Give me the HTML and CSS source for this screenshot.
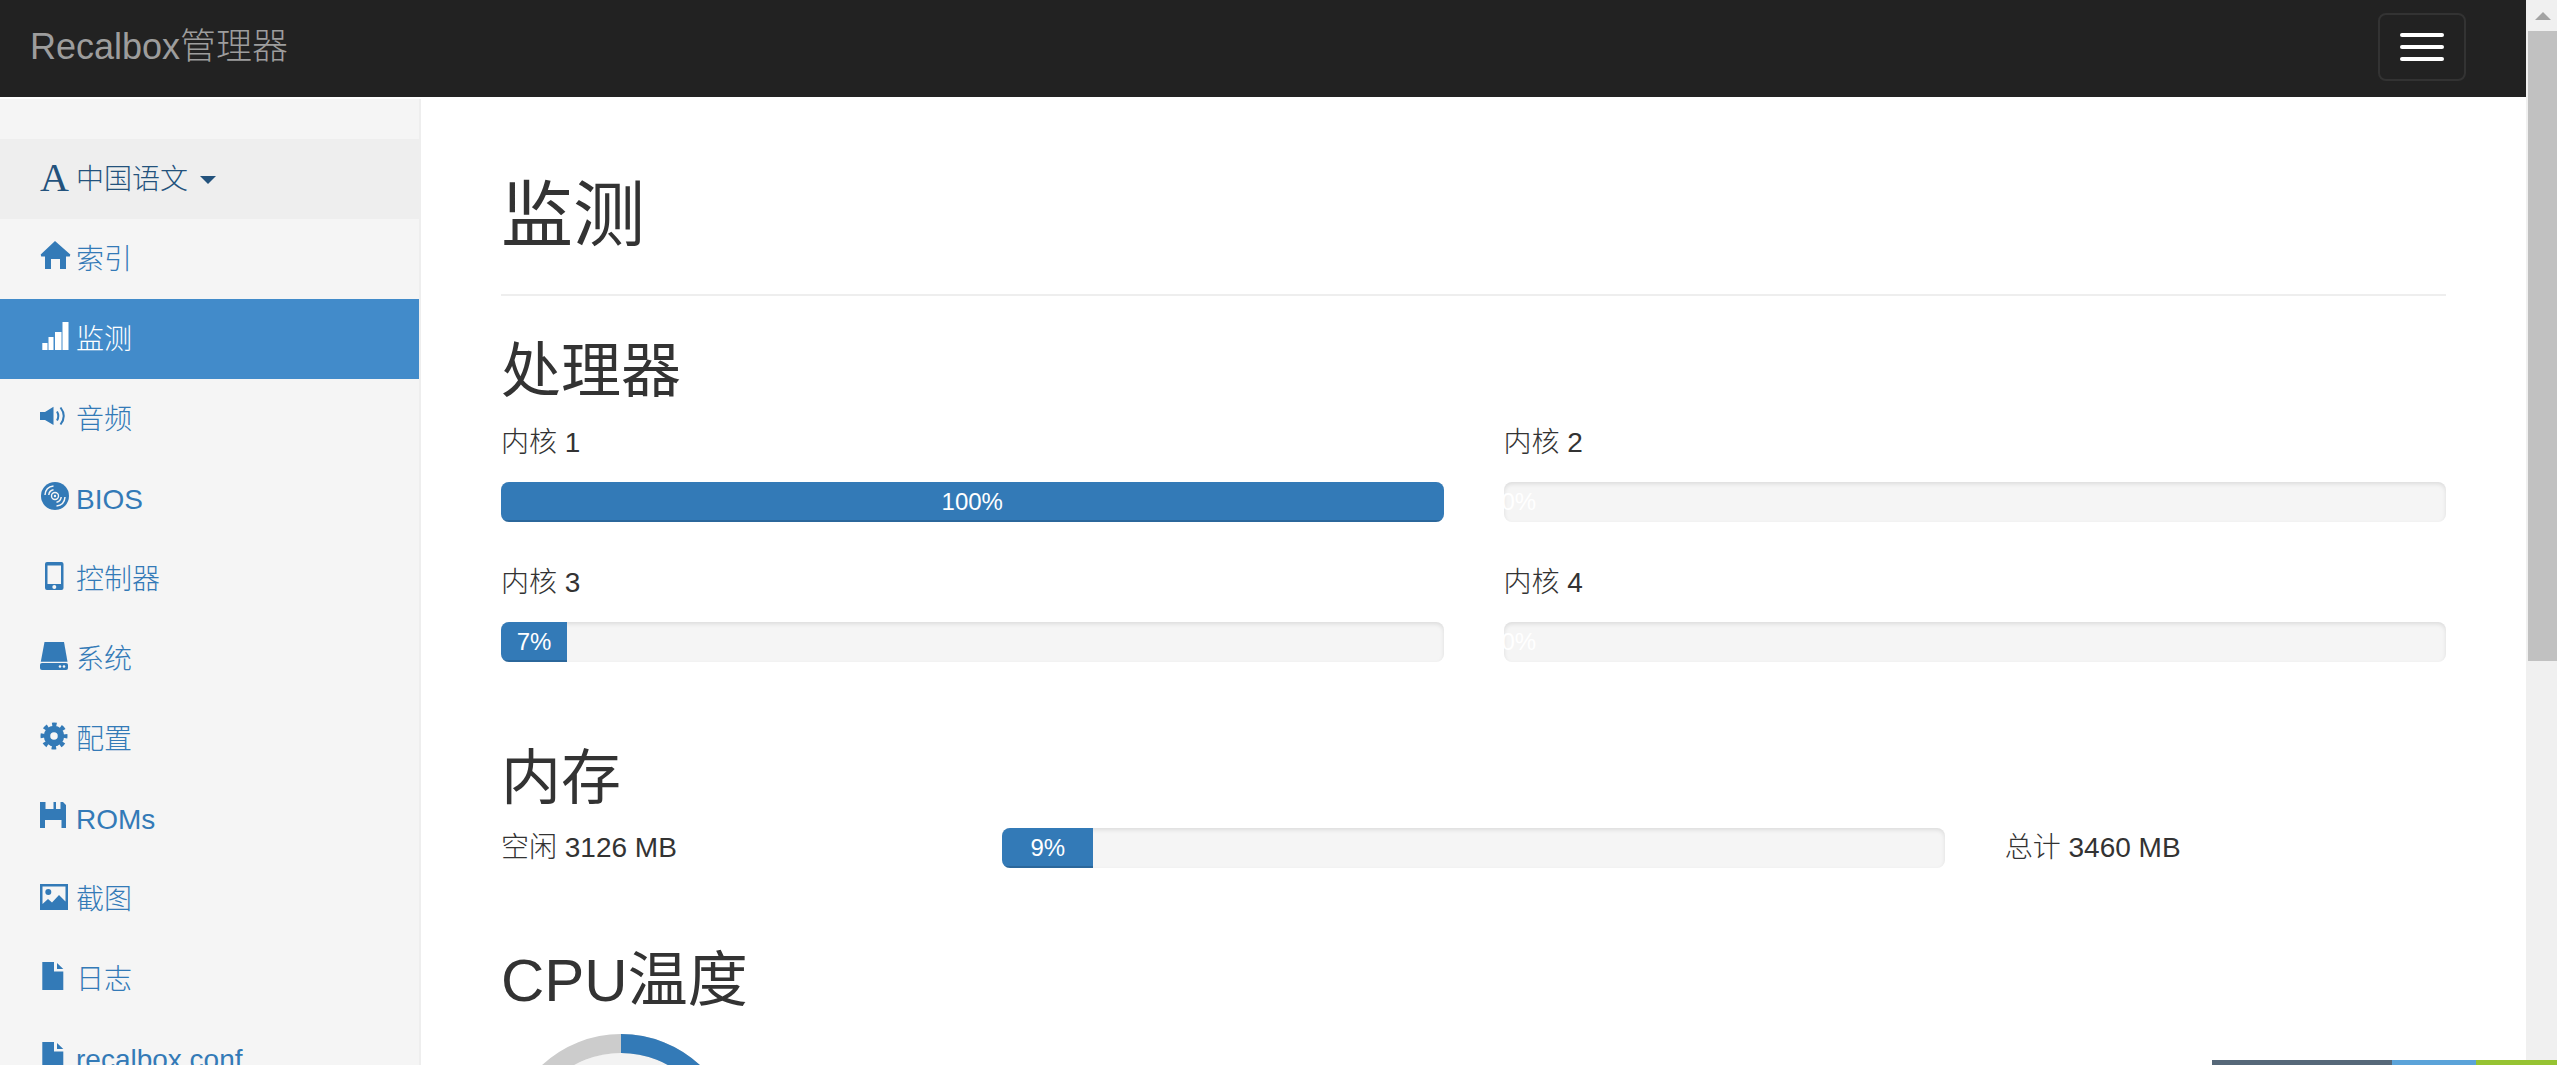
FILE: index.html
```html
<!DOCTYPE html>
<html lang="zh-CN">
<head>
<meta charset="utf-8">
<title>Recalbox管理器</title>
<link rel="stylesheet" href="styles.css">
</head>
<body>
<div class="page">
  <div class="viewport">
    <header class="navbar">
      <a class="brand">Recalbox管理器</a>
      <button class="toggle"><span></span><span></span><span></span></button>
    </header>
    <div class="layout">
      <nav class="sidebar">
        <a class="item lang"><span class="font-icon">A</span><span>中国语文</span><i class="caret"></i></a>
        <a class="item"><svg class="icon" viewBox="0 0 28 28"><path d="M15 0L.7 13.6 1.2 15.6H5V28H11V18H20V28H26V15.6H29.8L30.3 13.6Z"/></svg><span>索引</span></a>
        <a class="item active"><svg class="icon" viewBox="0 0 28 28"><path d="M2.3 22H7.5V29H2.3ZM8.5 16H13.5V29H8.5ZM15 11H21.5V29H15ZM22.5 1H28.5V29H22.5Z"/></svg><span>监测</span></a>
        <a class="item"><svg class="icon" viewBox="0 0 28 28"><path d="M0 11H5L13.5 5.7V24L5 19H0Z"/><path class="line" d="M17 10.5Q19.6 15 17 19.5M20.5 6.5Q27 15 20.5 23.5"/></svg><span>音频</span></a>
        <a class="item"><svg class="icon" viewBox="0 0 28 28"><circle cx="15" cy="15" r="14"/><circle class="hole" cx="15" cy="15" r="4.200"/><circle cx="15" cy="15" r="2.800"/><circle class="hole" cx="15" cy="15" r="1.200"/><path class="hole-line" d="M5 14Q5.500 6 13.500 5M8.800 14Q9.300 9.500 13.500 8.800M25 16Q24.500 24 16.500 25M21.200 16Q20.700 20.500 16.500 21.200"/></svg><span>BIOS</span></a>
        <a class="item"><svg class="icon" viewBox="0 0 28 28"><path fill-rule="evenodd" d="M7 1H21.500Q23.500 1 23.500 3V27Q23.500 29 21.500 29H7Q5 29 5 27V3Q5 1 7 1ZM7.500 4.500V23H21V4.500Z"/><circle class="hole" cx="14.300" cy="26" r="2"/></svg><span>控制器</span></a>
        <a class="item"><svg class="icon" viewBox="0 0 28 28"><path d="M4.500 1H24L27.500 20.700H.8Z"/><rect x="0" y="22" width="28" height="7" rx="2"/><circle class="hole" cx="20" cy="25.500" r="1.300"/><circle class="hole" cx="24" cy="25.500" r="1.300"/></svg><span>系统</span></a>
        <a class="item"><svg class="icon" viewBox="0 0 28 28"><circle class="cog-ring" cx="14" cy="15" r="7"/><circle class="cog-teeth" cx="14" cy="15" r="11.500"/></svg><span>配置</span></a>
        <a class="item"><svg class="icon" viewBox="0 0 28 28"><path fill-rule="evenodd" d="M0 1H23L26 4V27H0ZM5.500 1V8H13.500V1ZM16 1V8H20.500V1ZM5 19V27H21.500V19Z"/></svg><span>ROMs</span></a>
        <a class="item"><svg class="icon" viewBox="0 0 28 28"><path fill-rule="evenodd" d="M0 3H28V29H0ZM2.500 5.500V23L8 18L12 21.500L19 14L25.500 20.500V5.500Z"/><circle cx="8.300" cy="11" r="3"/></svg><span>截图</span></a>
        <a class="item"><svg class="icon" viewBox="0 0 28 28"><path d="M2.300 1H14V10.500H23.300V29H2.300ZM17 2L23.300 8H17Z"/></svg><span>日志</span></a>
        <a class="item"><svg class="icon" viewBox="0 0 28 28"><path d="M2.300 1H14V10.500H23.300V29H2.300ZM17 2L23.300 8H17Z"/></svg><span>recalbox.conf</span></a>
      </nav>
      <main class="main">
        <h1 class="page-title">监测</h1>
        <h2 class="heading">处理器</h2>
        <div class="cores">
          <div class="core">
            <div class="label">内核 1</div>
            <div class="progress"><div class="bar" style="width:100%">100%</div></div>
          </div>
          <div class="core">
            <div class="label">内核 2</div>
            <div class="progress"><div class="bar" style="width:0%">0%</div></div>
          </div>
          <div class="core">
            <div class="label">内核 3</div>
            <div class="progress"><div class="bar" style="width:7%">7%</div></div>
          </div>
          <div class="core">
            <div class="label">内核 4</div>
            <div class="progress"><div class="bar" style="width:0%">0%</div></div>
          </div>
        </div>
        <h2 class="heading memory-heading">内存</h2>
        <div class="memory">
          <div>空闲 3126 MB</div>
          <div class="progress"><div class="bar" style="width:9.65%">9%</div></div>
          <div>总计 3460 MB</div>
        </div>
        <h2 class="heading temp-heading">CPU温度</h2>
        <svg class="gauge" viewBox="0 0 232 232">
          <circle class="gauge-bg" cx="116" cy="116" r="97"/>
          <circle class="gauge-track" cx="116" cy="116" r="106.500"/>
          <path class="gauge-value" d="M116 9.500A106.500 106.500 0 0 1 222.500 116"/>
        </svg>
      </main>
    </div>
  </div>
  <div class="scrollbar">
    <div class="scroll-up"><i></i></div>
    <div class="thumb"></div>
  </div>
</div>
<div class="strip"><span class="s1"></span><span class="s2"></span><span class="s3"></span></div>
</body>
</html>
```
FILE: styles.css
```css
* { box-sizing: border-box; }
html, body { height: 100%; margin: 0; overflow: hidden; }
body {
  background: #fff;
  color: #333;
  font-family: "Liberation Sans", "Noto Sans CJK SC", sans-serif;
  font-size: 28px;
  font-weight: 300;
  line-height: 40px;
}
.page { display: flex; height: 100%; }
.viewport { flex: 1; min-width: 0; display: flex; flex-direction: column; overflow: hidden; }

.navbar {
  flex: none;
  height: 97px;
  background: #222;
  display: flex;
  align-items: center;
  justify-content: space-between;
  padding: 0 60px 0 30px;
}
.brand { color: #9d9d9d; font-size: 36px; line-height: 40px; margin-top: -3px; }
.toggle {
  width: 88px;
  height: 68px;
  margin-top: -3px;
  background: transparent;
  border: 2px solid #333;
  border-radius: 8px;
  padding: 0;
  display: flex;
  flex-direction: column;
  align-items: center;
  justify-content: center;
  gap: 8px;
}
.toggle span { display: block; width: 44px; height: 4px; border-radius: 2px; background: #fff; }

.layout { flex: 1; min-height: 0; display: flex; }
.sidebar {
  flex: none;
  width: 421px;
  margin-top: 2px;
  padding-top: 40px;
  background: #f5f5f5;
  border-right: 2px solid #eee;
  display: flex;
  flex-direction: column;
}
.item {
  flex: none;
  height: 80px;
  padding: 21px 0 19px 40px;
  display: flex;
  color: #337ab7;
  white-space: nowrap;
}
.item.lang { background: #eee; color: #23527c; }
.item.active { background: #428bca; color: #fff; }
.font-icon {
  width: 28px;
  margin-right: 8px;
  font-family: "Liberation Serif", serif;
  font-size: 40px;
  line-height: 36px;
}
.caret {
  align-self: center;
  width: 0;
  height: 0;
  margin-left: 12px;
  border-top: 8px solid currentColor;
  border-left: 8px solid transparent;
  border-right: 8px solid transparent;
}
.icon {
  flex: none;
  width: 28px;
  height: 28px;
  margin: 1px 8px 0 0;
  overflow: visible;
  fill: currentColor;
}
.icon .line { fill: none; stroke: currentColor; stroke-width: 2; }
.icon .hole { fill: #f5f5f5; }
.icon .hole-line { fill: none; stroke: #f5f5f5; stroke-width: 1.5; }
.icon .cog-ring { fill: none; stroke: currentColor; stroke-width: 6.5; }
.icon .cog-teeth { fill: none; stroke: currentColor; stroke-width: 4; stroke-dasharray: 4.5 4.53; stroke-dashoffset: 2.25; }

.main { flex: 1; min-width: 0; padding: 0 80px; }
.page-title {
  margin: 40px 0 0;
  padding-bottom: 2px;
  border-bottom: 2px solid #eee;
  font-size: 72px;
  font-weight: 400;
  line-height: 80px;
  height: 159px;
  display: flex;
  align-items: center;
}
.heading { margin: 0; font-size: 60px; font-weight: 400; line-height: 66px; }
.page-title + .heading { margin-top: 43px; }
.cores {
  display: grid;
  grid-template-columns: 1fr 1fr;
  column-gap: 60px;
  margin-top: 18px;
}
.core { height: 140px; }
.label { height: 59px; }
.progress {
  height: 40px;
  border-radius: 8px;
  background: #f5f5f5;
  box-shadow: inset 0 2px 4px rgba(0, 0, 0, .1);
  overflow: hidden;
}
.bar {
  height: 100%;
  background: #337ab7;
  color: #fff;
  font-size: 24px;
  line-height: 40px;
  text-align: center;
  box-shadow: inset 0 -2px 0 rgba(0, 0, 0, .15);
}
.bar[style="width:0%"] { background: none; box-shadow: none; white-space: nowrap; text-align: left; text-indent: -2px; }
.memory-heading { margin-top: 43px; }
.memory {
  display: grid;
  grid-template-columns: 441.25fr 942.5fr 441.25fr;
  column-gap: 60px;
  margin-top: 16px;
  align-items: center;
}
.temp-heading { margin-top: 80px; }
.gauge { display: block; width: 232px; height: 232px; margin: 20px 0 0 4px; }
.gauge-bg { fill: #f3f3f3; }
.gauge-track { fill: none; stroke: #ccc; stroke-width: 19; }
.gauge-value { fill: none; stroke: #337ab7; stroke-width: 19; }

.scrollbar { flex: none; width: 31px; background: #f0f0f0; padding-left: 2px; }
.scroll-up { height: 31px; margin-left: -2px; display: flex; align-items: center; justify-content: center; padding-left: 2px; }
.scroll-up i {
  display: block;
  width: 0;
  height: 0;
  border-bottom: 8px solid #a3a3a3;
  border-left: 8px solid transparent;
  border-right: 8px solid transparent;
}
.thumb { height: 630px; background: #c1c1c1; }

.strip { position: fixed; right: 0; bottom: 0; display: flex; height: 5px; }
.strip span { display: block; }
.s1 { width: 180px; background: #566879; }
.s2 { width: 84px; background: #5ba3d9; }
.s3 { width: 81px; background: #96c332; }
```
